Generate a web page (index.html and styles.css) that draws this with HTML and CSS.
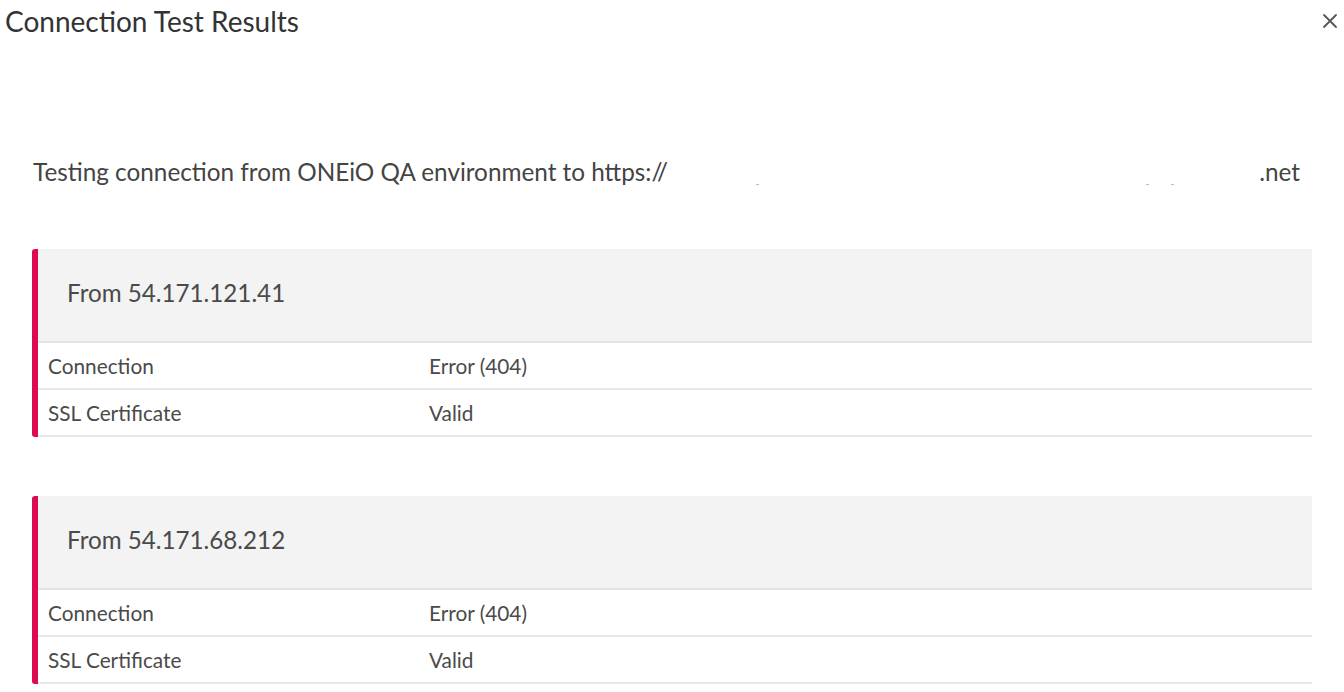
FILE: index.html
```html
<!DOCTYPE html>
<html lang="en">
<head>
<meta charset="utf-8">
<title>Connection Test Results</title>
<link rel="stylesheet" href="styles.css">
</head>
<body>
<div class="dialog">
  <header class="dialog-header">
    <h1 class="dialog-title">Connection Test Results</h1>
    <button class="close-btn" aria-label="Close">
      <svg width="16" height="16" viewBox="0 0 16 16"><path d="M2 2 L14 14 M14 2 L2 14" stroke="#555" stroke-width="1.8" stroke-linecap="round"/></svg>
    </button>
  </header>
  <div class="dialog-body">
    <p class="intro"><span>Testing connection from ONEiO QA environment to https://</span><span class="redacted"><i class="dot d1"></i><i class="dot d2"></i><i class="dot d3"></i></span><span>.net</span></p>

    <section class="card">
      <div class="card-header">From 54.171.121.41</div>
      <div class="row"><span class="label">Connection</span><span class="value">Error (404)</span></div>
      <div class="row"><span class="label">SSL Certificate</span><span class="value">Valid</span></div>
    </section>

    <section class="card">
      <div class="card-header">From 54.171.68.212</div>
      <div class="row"><span class="label">Connection</span><span class="value">Error (404)</span></div>
      <div class="row"><span class="label">SSL Certificate</span><span class="value">Valid</span></div>
    </section>
  </div>
</div>
</body>
</html>
```

FILE: styles.css
```css
* { box-sizing: border-box; }
html, body { margin: 0; padding: 0; background: #fff; }
body {
  font-family: Lato, "Open Sans", "Liberation Sans", sans-serif;
  color: #333;
  overflow: hidden;
}
.dialog { width: 1344px; height: 692px; }
.dialog-header {
  display: flex;
  align-items: center;
  justify-content: space-between;
  height: 42px;
  padding: 0 6px 0 5px;
}
.dialog-title {
  margin: 0;
  font-size: 28px;
  font-weight: 400;
  color: #333;
}
.close-btn {
  border: 0;
  background: none;
  padding: 0;
  width: 16px;
  height: 16px;
  display: flex;
  cursor: pointer;
}
.dialog-body { padding: 115px 32px 0 32px; }
.intro {
  margin: 0 0 62px 0;
  display: flex;
  font-size: 24.3px;
  line-height: 30px;
  color: #444;
  padding: 0 12px 0 1px;
}
.redacted {
  flex: 1;
  display: flex;
  position: relative;
}
.dot {
  position: absolute;
  top: 27px;
  width: 3px;
  height: 1px;
  background: #bbb;
}
.d1 { left: 88px; }
.d2 { left: 478px; }
.d3 { left: 503px; }
.card {
  border-left: 6px solid #dc0a4e;
  border-radius: 3px;
  margin-bottom: 59px;
}
.card-header {
  height: 94px;
  background: #f3f3f3;
  display: flex;
  align-items: center;
  padding: 0 0 5px 29px;
  font-size: 24.2px;
  color: #4a4a4a;
  border-bottom: 2px solid #e4e4e4;
}
.row {
  display: grid;
  grid-template-columns: 381px 1fr;
  align-items: center;
  height: 47px;
  padding: 0 0 1px 10px;
  border-bottom: 2px solid #e8e8e8;
  font-size: 20.8px;
  color: #4a4a4a;
}
```
